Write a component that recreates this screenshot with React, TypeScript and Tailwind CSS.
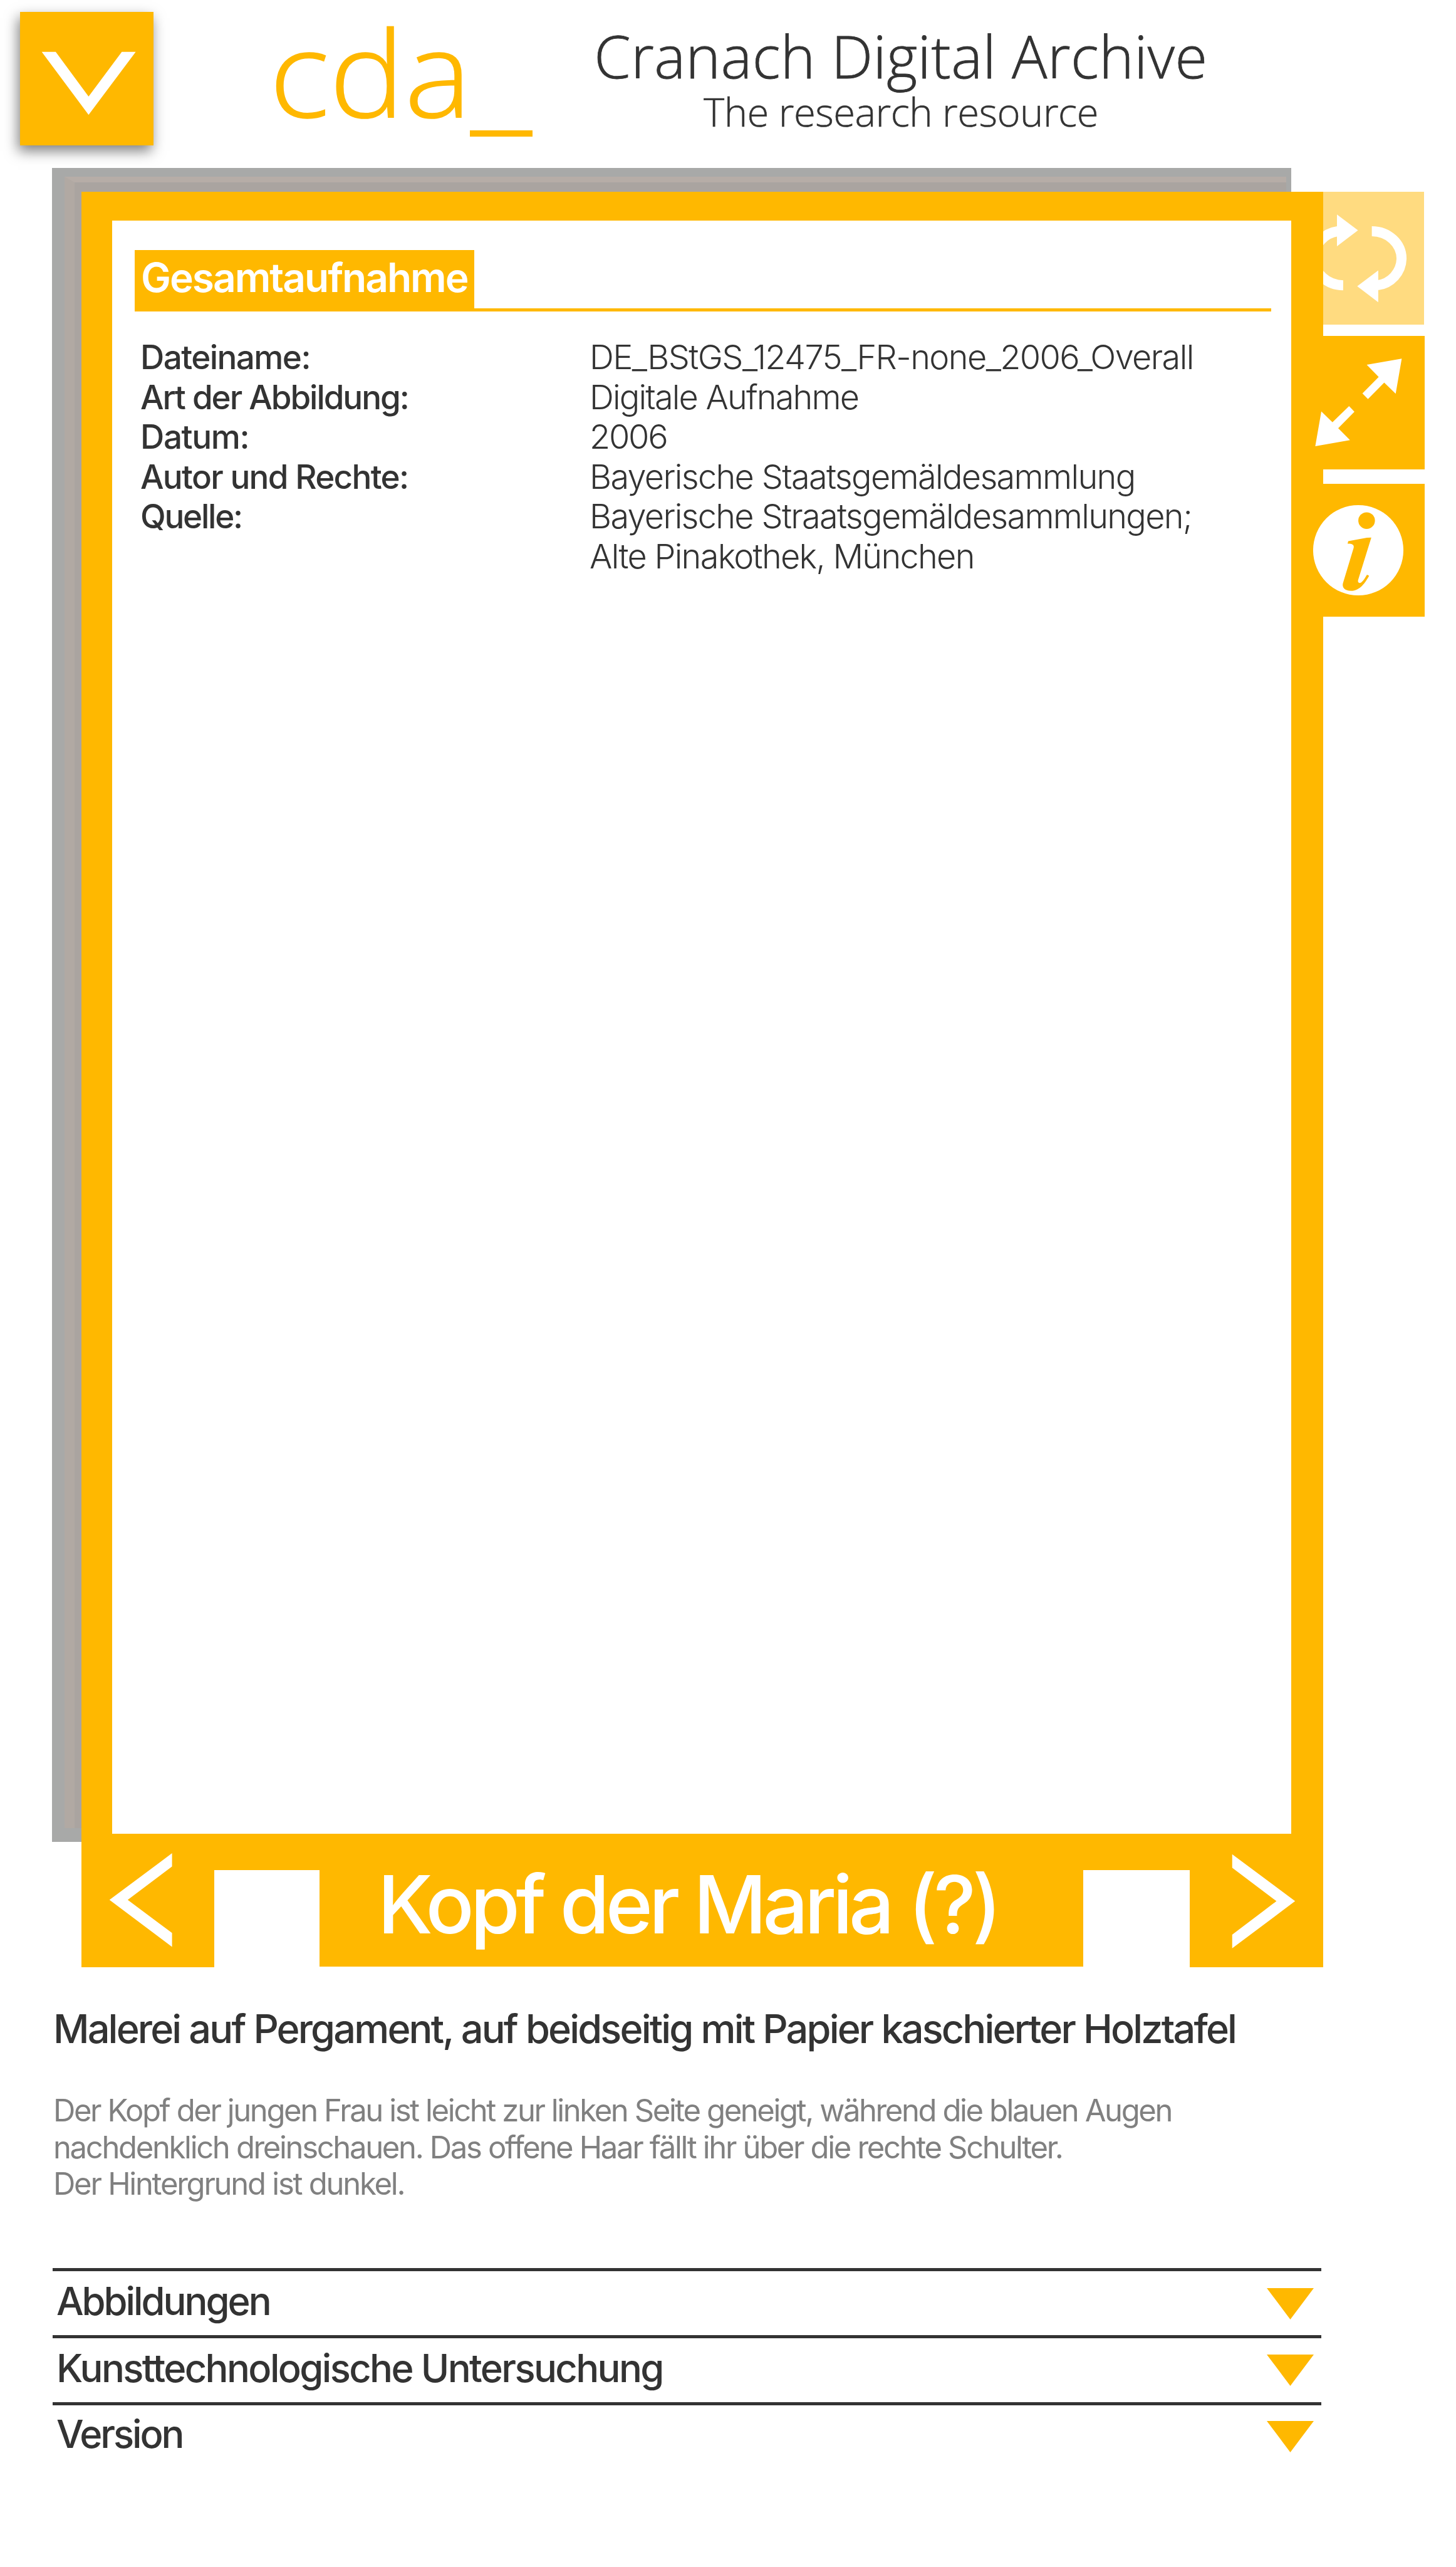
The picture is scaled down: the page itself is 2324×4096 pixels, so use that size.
import React from "react";

const metadata = [
  { label: "Dateiname:", value: "DE_BStGS_12475_FR-none_2006_Overall", labelTrack: "tracking-[-0.0296em]", valueTrack: "tracking-[-0.0293em]" },
  { label: "Art der Abbildung:", value: "Digitale Aufnahme", labelTrack: "tracking-[-0.0389em]", valueTrack: "tracking-[-0.0337em]" },
  { label: "Datum:", value: "2006", labelTrack: "tracking-[-0.0257em]", valueTrack: "tracking-[-0.0411em]" },
  { label: "Autor und Rechte:", value: "Bayerische Staatsgemäldesammlung", labelTrack: "tracking-[-0.0321em]", valueTrack: "tracking-[-0.0309em]" },
  { label: "Quelle:", value: "Bayerische Straatsgemäldesammlungen;", labelTrack: "tracking-[-0.0425em]", valueTrack: "tracking-[-0.0313em]" },
  { label: "", value: "Alte Pinakothek, München", labelTrack: "", valueTrack: "tracking-[-0.0317em]" },
];

const sections = [
  { title: "Abbildungen", track: "tracking-[-0.0491em]", text: "leading-[96px]", arrow: "mt-[27px]" },
  { title: "Kunsttechnologische Untersuchung", track: "tracking-[-0.0425em]", text: "leading-[95px]", arrow: "mt-[26px]" },
  { title: "Version", track: "tracking-[-0.05em]", text: "leading-[92px]", arrow: "mt-[25px]" },
];

function Header() {
  return (
    <header className="flex h-[268px] items-start pl-8">
      <button className="mt-[19px] h-[213px] w-[213px] shrink-0 bg-[#ffb800] shadow-[-3px_9px_20px_rgba(0,0,0,0.5)]">
        <svg viewBox="42 25 278 278" className="h-full w-full" fill="white">
          <polygon points="87.2,108.3 116.3,108.3 184.8,201.3 254,108.3 283,108.3 184.8,239.3" />
        </svg>
      </button>
      <div className="ml-[185px] mt-[18px] flex font-['Open_Sans'] font-light text-[#ffb800]">
        <span className="w-[320px] origin-left scale-x-[1.055] whitespace-nowrap text-[191px] leading-[191px] [-webkit-text-stroke:1.5px_#ffb800]">cda</span>
        <span className="mt-[190px] h-[10px] w-[100px] bg-[#ffb800]" />
      </div>
      <div className="ml-[92px] mt-[42px] w-[992px] whitespace-nowrap text-center font-['Open_Sans'] font-light text-[#333]">
        <h1 className="text-[94px] leading-[94px] tracking-[0.005em] [-webkit-text-stroke:0.8px_#333]">Cranach Digital Archive</h1>
        <p className="mt-[6px] text-[63.4px] leading-[72px] tracking-[-0.0085em] [-webkit-text-stroke:0.5px_#333]">The research resource</p>
      </div>
    </header>
  );
}

function PaintingBackdrop() {
  return (
    <div className="absolute left-[83px] top-0 h-[2671px] w-[1978px] bg-[#a8a9a8] pb-[22px] pl-[20px] pr-[8px] pt-[14px]">
      <div className="h-full w-full border-l-[16px] border-t-[9px] border-l-[#b1a9a3] border-t-[#b6ada7] bg-[#aaa4a0]" />
    </div>
  );
}

function SideButtons() {
  return (
    <nav className="-ml-[50px] flex flex-col items-start">
      <button className="h-[212px] w-[211px] bg-[#ffdb80]">
        <svg viewBox="2698 400 276.5 278" className="h-full w-full" fill="none" stroke="white" strokeWidth="21">
          <path d="M2865.3 482.6A62 57.5 0 0 1 2927.5 540A58 57.5 0 0 1 2877 595.6" />
          <path d="M2805.3 595.6A62 57.5 0 0 1 2743.7 540A58 57.5 0 0 1 2794 482.6" />
          <polygon points="2834.7,597.8 2878.7,564.6 2878.7,631" fill="white" stroke="none" />
          <polygon points="2836.3,480.7 2792.3,447.5 2792.3,514" fill="white" stroke="none" />
        </svg>
      </button>
      <button className="relative z-20 mt-[18px] h-[213px] w-[212px] bg-[#ffb800]">
        <svg viewBox="2698 702 278 278" className="h-full w-full" fill="white">
          <polygon points="2928,748.8 2854.7,761.8 2879.7,787.1 2845.7,821.6 2857.3,833.3 2891.3,798.9 2915.3,822.3" />
          <polygon points="2747,932.2 2759.7,859.4 2783,882.1 2817.7,848.3 2829,860 2795,894.5 2819.7,919.2" />
        </svg>
      </button>
      <button className="relative z-20 mt-[23px] h-[212px] w-[212px] bg-[#ffb800]">
        <svg viewBox="2698 1010 278 278" className="h-full w-full" fill="#ffb800">
          <circle cx="2837" cy="1149" r="94.5" fill="white" />
          <circle cx="2854.5" cy="1087" r="17.4" />
          <path d="M2816 1130L2855 1122.8L2864.3 1122.6L2836.8 1211C2835.3 1216 2838.5 1219 2843 1216.5C2848 1213 2851.5 1206.5 2855.3 1200.3L2859.7 1202.4C2852 1216 2841 1234 2821.7 1234C2809 1234 2802.5 1227 2805 1218L2827.3 1144C2829 1137 2823 1135 2814.7 1135.3Z" />
        </svg>
      </button>
    </nav>
  );
}

function Details() {
  return (
    <div className="h-[2574px] pl-[36px] pt-[47px]">
      <div className="flex w-[1814px] items-end">
        <h2 className="h-[98px] w-[542px] whitespace-nowrap bg-[#ffb800] pl-[10px] text-[64px] font-semibold leading-[88px] tracking-[-0.0313em] text-white">
          Gesamtaufnahme
        </h2>
        <span className="h-[5px] flex-1 bg-[#ffb800]" />
      </div>
      <dl className="mt-[42px] whitespace-nowrap pl-[9px] leading-[63.5px]">
        {metadata.map((row) => (
          <div key={row.value} className="flex">
            <dt className={"w-[717px] text-[53px] font-medium " + row.labelTrack}>{row.label}</dt>
            <dd className={"-mt-px text-[54px] font-light leading-[63.5px] " + row.valueTrack}>{row.value}</dd>
          </div>
        ))}
      </dl>
    </div>
  );
}

function TitleBar() {
  return (
    <div className="flex items-start">
      <button className="h-[213px] w-[212px] bg-[#ffb800]">
        <svg viewBox="170.5 3829 278 278" className="h-full w-full" fill="white">
          <polygon points="229.2,3966.7 360.2,3869 360.2,3896.7 267.4,3966.7 360.2,4036 360.2,4065" />
        </svg>
      </button>
      <span className="h-[58px] w-[168px] bg-[#ffb800]" />
      <h2 className="h-[212px] w-[1220px] whitespace-nowrap bg-[#ffb800] pl-[93px] pt-[7px] text-[128px] font-medium leading-[212px] tracking-[-0.0485em] text-white">
        Kopf der Maria (?)
      </h2>
      <span className="h-[58px] w-[170px] bg-[#ffb800]" />
      <button className="h-[213px] w-[213px] bg-[#ffb800]">
        <svg viewBox="2486.4 3829 278 278" className="h-full w-full" fill="white">
          <polygon points="2706,3969.3 2574.9,3871.7 2574.9,3899.7 2667.2,3969.3 2574.9,4039.3 2574.9,4067.7" />
        </svg>
      </button>
    </div>
  );
}

export default function App() {
  return (
    <div className="h-[4096px] w-[2324px] overflow-hidden bg-white font-['Inter',sans-serif] text-[#333]">
      <Header />
      <section className="relative flex items-start pl-[130px] pt-[38px]">
        <PaintingBackdrop />
        <div className="relative z-10 w-[1982px] shrink-0">
          <div className="border-l-[49px] border-r-[51px] border-t-[46px] border-[#ffb800] bg-white">
            <Details />
          </div>
          <TitleBar />
        </div>
        <SideButtons />
      </section>
      <main className="w-[2109px] whitespace-nowrap pl-[84px]">
        <h3 className="mt-[60px] pl-px text-[63px] font-medium leading-[76px] tracking-[-0.0449em]">
          Malerei auf Pergament, auf beidseitig mit Papier kaschierter Holztafel
        </h3>
        <div className="mt-[64px] pl-px text-[49px] font-normal leading-[58.5px] text-[#808080]">
          <p className="tracking-[-0.0493em]">Der Kopf der jungen Frau ist leicht zur linken Seite geneigt, während die blauen Augen</p>
          <p className="tracking-[-0.0478em]">nachdenklich dreinschauen. Das offene Haar fällt ihr über die rechte Schulter.</p>
          <p className="tracking-[-0.046em]">Der Hintergrund ist dunkel.</p>
        </div>
        <ul className="mt-[104.5px]">
          {sections.map((s) => (
            <li key={s.title} className="flex h-[107px] items-start justify-between border-t-[5px] border-[#333] pl-[6px] pr-[12px]">
              <span className={"text-[61.5px] font-medium " + s.text + " " + s.track}>{s.title}</span>
              <svg viewBox="0 0 75 50" className={"h-[50px] w-[75px] " + s.arrow} fill="#ffb800">
                <polygon points="0,0 75,0 37.5,50" />
              </svg>
            </li>
          ))}
        </ul>
      </main>
    </div>
  );
}
